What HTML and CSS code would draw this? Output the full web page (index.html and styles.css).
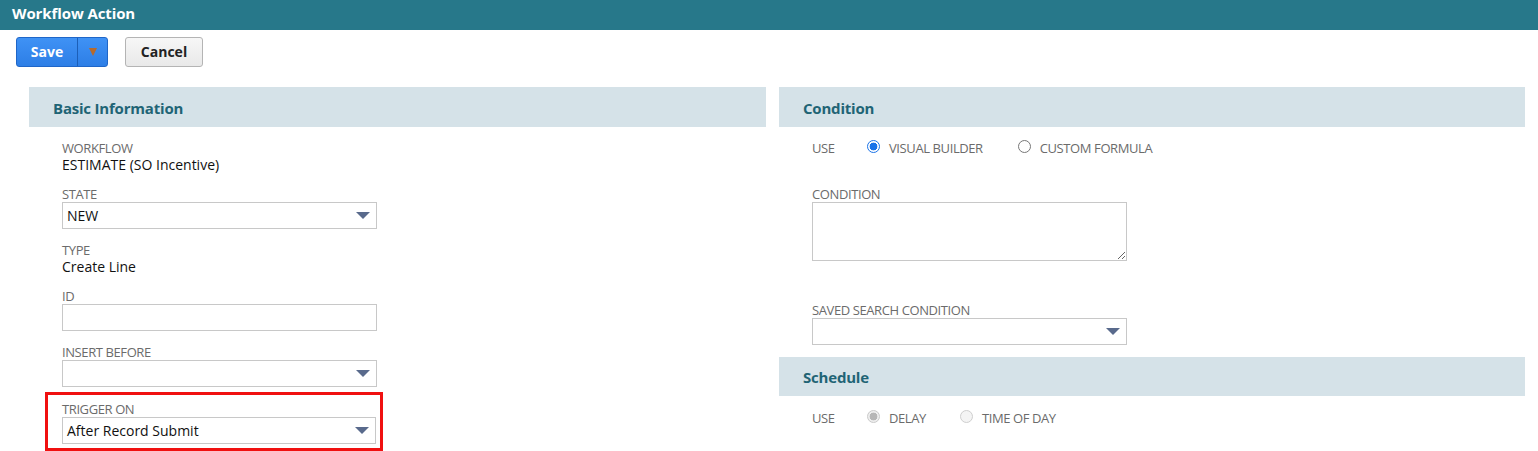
FILE: index.html
```html
<!DOCTYPE html>
<html>
<head>
<meta charset="utf-8">
<link rel="stylesheet" href="styles.css">
</head>
<body>
<div class="titlebar">Workflow Action</div>
<div class="toolbar">
  <div class="btn-split">
    <span class="btn-save">Save</span>
    <span class="btn-drop"><span class="drop-tri"></span></span>
  </div>
  <span class="btn-cancel">Cancel</span>
</div>
<div class="columns">
  <div class="col">
    <div class="sec-head">Basic Information</div>
    <div class="fields">
      <div class="field">
        <div class="lbl">WORKFLOW</div>
        <div class="val">ESTIMATE (SO Incentive)</div>
      </div>
      <div class="field">
        <div class="lbl">STATE</div>
        <div class="select"><span class="sel-text">NEW</span><span class="arrow"></span></div>
      </div>
      <div class="field">
        <div class="lbl">TYPE</div>
        <div class="val">Create Line</div>
      </div>
      <div class="field">
        <div class="lbl">ID</div>
        <div class="input"></div>
      </div>
      <div class="field">
        <div class="lbl">INSERT BEFORE</div>
        <div class="select"><span class="sel-text"></span><span class="arrow"></span></div>
      </div>
      <div class="field highlight">
        <div class="lbl">TRIGGER ON</div>
        <div class="select"><span class="sel-text">After Record Submit</span><span class="arrow"></span></div>
      </div>
    </div>
  </div>
  <div class="col">
    <div class="sec-head">Condition</div>
    <div class="fields right">
      <div class="radio-row">
        <span class="use">USE</span>
        <span class="opt"><span class="radio checked"></span>VISUAL BUILDER</span>
        <span class="opt"><span class="radio"></span>CUSTOM FORMULA</span>
      </div>
      <div class="field cond">
        <div class="lbl">CONDITION</div>
        <textarea class="textarea"></textarea>
      </div>
      <div class="field saved">
        <div class="lbl">SAVED SEARCH CONDITION</div>
        <div class="select"><span class="sel-text"></span><span class="arrow"></span></div>
      </div>
    </div>
    <div class="sec-head sched">Schedule</div>
    <div class="fields right">
      <div class="radio-row sched-row">
        <span class="use">USE</span>
        <span class="opt"><span class="radio disabled-on"></span>DELAY</span>
        <span class="opt"><span class="radio disabled"></span>TIME OF DAY</span>
      </div>
    </div>
  </div>
</div>
</body>
</html>
```

FILE: styles.css
```css
* { box-sizing: border-box; }
html, body { margin: 0; padding: 0; background: #fff; }
body {
  font-family: "Open Sans", "Liberation Sans", sans-serif;
  color: #222;
  width: 1538px;
  height: 451px;
  overflow: hidden;
}
.titlebar {
  height: 30px;
  background: #27788a;
  color: #fff;
  font-weight: 700;
  font-size: 15px;
  line-height: 26px;
  padding-left: 12px;
  letter-spacing: -0.1px;
}
.toolbar {
  display: flex;
  gap: 17px;
  padding: 7px 0 0 16px;
  height: 57px;
  align-items: flex-start;
}
.btn-split {
  display: flex;
  height: 30px;
  width: 92px;
  border: 1px solid #1f66c8;
  border-radius: 3px;
  background: linear-gradient(#3f92f5, #2d7ee6);
  overflow: hidden;
}
.btn-save {
  width: 61px;
  color: #fff;
  font-weight: 700;
  font-size: 14px;
  line-height: 27px;
  text-align: center;
  border-right: 1px solid #1c5fb8;
}
.btn-drop {
  flex: 1;
  display: flex;
  align-items: center;
  justify-content: center;
}
.drop-tri {
  width: 0; height: 0;
  border-left: 4px solid transparent;
  border-right: 4px solid transparent;
  border-top: 8px solid #b66a2c;
}
.btn-cancel {
  height: 30px;
  width: 78px;
  border: 1px solid #b4b4b4;
  border-radius: 3px;
  background: linear-gradient(#f7f7f7, #e9e9e9);
  color: #222;
  font-weight: 700;
  font-size: 14px;
  line-height: 27px;
  text-align: center;
}
.columns {
  display: grid;
  grid-template-columns: 737px 746px;
  column-gap: 13px;
  padding-left: 29px;
}
.sec-head {
  height: 40px;
  background: #d5e2e8;
  color: #1f6475;
  font-weight: 700;
  font-size: 15px;
  line-height: 42px;
  padding-left: 24px;
  letter-spacing: -0.2px;
}
.fields {
  padding: 13px 0 0 33px;
  display: flex;
  flex-direction: column;
}
.field { margin-bottom: 13px; width: 315px; }
.lbl {
  font-size: 13px;
  line-height: 16px;
  color: #6b6b6b;
  letter-spacing: -0.4px;
}
.val {
  font-size: 14px;
  line-height: 17px;
  color: #111;
}
.select, .input {
  height: 27px;
  border: 1px solid #c8c8c8;
  background: #fff;
  display: flex;
  align-items: center;
  justify-content: space-between;
  padding: 0 6px 0 4px;
}
.sel-text {
  font-size: 14px;
  color: #111;
}
.arrow {
  width: 0; height: 0;
  border-left: 7px solid transparent;
  border-right: 7px solid transparent;
  border-top: 7px solid #596a8c;
}
.highlight {
  border: 3px solid #f01010;
  margin: -8px 0 0 -17px;
  padding: 6px 4px 4px 14px;
  width: 338px;
}
.right { padding-top: 11px; }
.radio-row {
  display: flex;
  align-items: center;
  height: 20px;
  font-size: 13px;
  color: #6b6b6b;
  letter-spacing: -0.4px;
}
.use { width: 55px; }
.opt {
  display: flex;
  align-items: center;
  margin-right: 35px;
}
.radio {
  width: 13px; height: 13px;
  border-radius: 50%;
  border: 1px solid #777;
  background: #fff;
  margin-right: 9px;
  margin-top: -3px;
}
.radio.checked {
  border: 1px solid #1a73e8;
  background: radial-gradient(circle, #1a73e8 0 3.6px, #fff 4.2px);
}
.radio.disabled-on {
  border: 1px solid #c9c9c9;
  background: radial-gradient(circle, #b6b6b6 0 3.6px, #eee 4.2px);
}
.radio.disabled {
  border: 1px solid #cfcfcf;
  background: #f4f4f4;
}
.cond { margin-top: 28px; margin-bottom: 0; }
.textarea {
  display: block;
  width: 315px;
  height: 59px;
  border: 1px solid #c8c8c8;
  resize: vertical;
  margin: 0;
  padding: 0;
  font-family: inherit;
}
.saved { margin-top: 41px; margin-bottom: 12px; }
.sched { height: 39px; line-height: 41px; }
.sched-row { margin-top: 1px; }
.sched-row .opt { margin-right: 34px; }
```
